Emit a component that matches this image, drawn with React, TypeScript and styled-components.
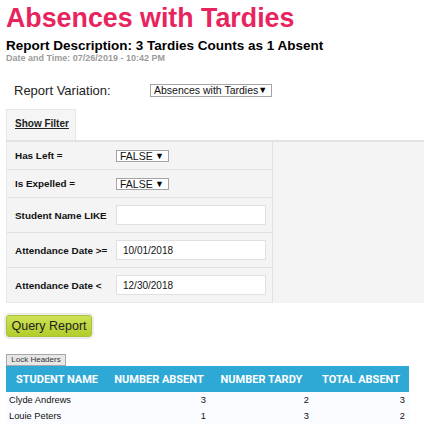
import React, { FC } from "react";
import styled, { createGlobalStyle } from "styled-components";

const GlobalStyle = createGlobalStyle`
  html, body {
    margin: 0;
    padding: 0;
    background: #fff;
    font-family: "Liberation Sans", Arial, sans-serif;
    color: #111;
  }
`;

const Page = styled.div`
  padding: 5px 0 0 6px;
  width: 418px;
  overflow: hidden;
`;

const Title = styled.h1`
  margin: 0;
  font-size: 26.8px;
  line-height: 26px;
  font-weight: bold;
  color: #e8245e;
`;

const Description = styled.h2`
  margin: 8px 0 0;
  font-size: 13.5px;
  line-height: 13px;
  font-weight: bold;
  color: #000;
`;

const Stamp = styled.div`
  margin-top: 1px;
  font-size: 9px;
  line-height: 10px;
  font-weight: bold;
  color: #9b9b9b;
`;

const VariationRow = styled.div`
  display: flex;
  align-items: center;
  height: 14px;
  margin: 20px 0 0 8px;
  font-size: 13px;
  color: #222;
`;

const VariationLabel = styled.span`
  width: 136px;
`;

const FakeSelect = styled.span<{ $width: number; $height: number }>`
  display: inline-flex;
  align-items: center;
  box-sizing: border-box;
  width: ${(p) => p.$width}px;
  height: ${(p) => p.$height}px;
  padding: 0 4px 0 3px;
  border: 1px solid #a4a4a4;
  background: #fff;
  font-size: 10.5px;
  line-height: 10px;
  color: #111;
  white-space: nowrap;
  overflow: hidden;
  &::after {
    content: "▼";
    margin-left: auto;
    font-size: 9px;
    color: #000;
  }
`;

const TabStrip = styled.div`
  display: flex;
  margin-top: 12px;
`;

const Tab = styled.div`
  box-sizing: border-box;
  width: 70px;
  height: 31px;
  padding: 8px 0 0 8px;
  background: #f5f5f5;
  border: 1px solid #e6e6e6;
  border-bottom: none;
  font-size: 10px;
  font-weight: bold;
  text-decoration: underline;
  color: #222;
`;

const FilterPanel = styled.div`
  display: flex;
  width: 430px;
  background: #f4f4f4;
  border-top: 2px solid #e2e2e2;
`;

const FilterTable = styled.div`
  width: 267px;
  border-right: 1px solid #e2e2e2;
  border-left: 1px solid #e9e9e9;
  box-sizing: border-box;
`;

const FilterRow = styled.div<{ $height: number }>`
  display: flex;
  align-items: center;
  height: ${(p) => p.$height}px;
  border-bottom: 1px solid #e2e2e2;
  &:last-child {
    border-bottom: 1px solid #e6e6e6;
  }
`;

const FilterLabel = styled.span`
  width: 109px;
  padding-left: 8px;
  box-sizing: border-box;
  font-size: 9.9px;
  font-weight: bold;
  color: #111;
  white-space: nowrap;
`;

const TextBox = styled.div`
  box-sizing: border-box;
  width: 150px;
  height: 20px;
  padding: 0 6px;
  display: flex;
  align-items: center;
  background: #fff;
  border: 1px solid #e0e0e0;
  font-size: 10px;
  color: #111;
`;

const QueryButton = styled.button`
  margin: 12px 0 0;
  width: 86px;
  height: 22px;
  padding: 0;
  border: 1px solid #a9c23a;
  border-radius: 3px;
  background: linear-gradient(#cfe256, #b2cd2c);
  box-shadow: 0 0 0 2px #ececec;
  font-family: "Liberation Sans", Arial, sans-serif;
  font-size: 12.5px;
  color: #222;
`;

const LockButton = styled.button`
  display: block;
  margin-top: 17px;
  width: 60px;
  height: 12px;
  padding: 0;
  border: 1px solid #a8a8a8;
  background: #e7e7e7;
  font-family: "Liberation Sans", Arial, sans-serif;
  font-size: 8px;
  line-height: 10px;
  color: #333;
`;

const Table = styled.table`
  border-collapse: collapse;
  width: 403px;
  table-layout: fixed;
`;

const HeadCell = styled.th<{ $width: number }>`
  width: ${(p) => p.$width}px;
  height: 26px;
  padding: 0;
  background: #2ea8d5;
  color: #fff;
  font-family: Roboto, "Liberation Sans", sans-serif;
  font-size: 11px;
  font-weight: bold;
  text-align: center;
`;

const Cell = styled.td<{ $num?: boolean }>`
  height: 16px;
  padding: 0 ${(p) => (p.$num ? "4px" : "3px")};
  background: #fbfcff;
  font-size: 9.3px;
  color: #111;
  text-align: ${(p) => (p.$num ? "right" : "left")};
`;

interface StudentRow {
  name: string;
  absent: number;
  tardy: number;
  total: number;
}

const rows: StudentRow[] = [
  { name: "Clyde Andrews", absent: 3, tardy: 2, total: 3 },
  { name: "Louie Peters", absent: 1, tardy: 3, total: 2 },
];

const App: FC = () => {
  return (
    <Page>
      <GlobalStyle />
      <Title>Absences with Tardies</Title>
      <Description>Report Description: 3 Tardies Counts as 1 Absent</Description>
      <Stamp>Date and Time: 07/26/2019 - 10:42 PM</Stamp>

      <VariationRow>
        <VariationLabel>Report Variation:</VariationLabel>
        <FakeSelect $width={122} $height={13}>Absences with Tardies</FakeSelect>
      </VariationRow>

      <TabStrip>
        <Tab>Show Filter</Tab>
      </TabStrip>
      <FilterPanel>
        <FilterTable>
          <FilterRow $height={27}>
            <FilterLabel>Has Left =</FilterLabel>
            <FakeSelect $width={53} $height={12}>FALSE</FakeSelect>
          </FilterRow>
          <FilterRow $height={27}>
            <FilterLabel>Is Expelled =</FilterLabel>
            <FakeSelect $width={53} $height={12}>FALSE</FakeSelect>
          </FilterRow>
          <FilterRow $height={34}>
            <FilterLabel>Student Name LIKE</FilterLabel>
            <TextBox />
          </FilterRow>
          <FilterRow $height={34}>
            <FilterLabel>Attendance Date &gt;=</FilterLabel>
            <TextBox>10/01/2018</TextBox>
          </FilterRow>
          <FilterRow $height={34}>
            <FilterLabel>Attendance Date &lt;</FilterLabel>
            <TextBox>12/30/2018</TextBox>
          </FilterRow>
        </FilterTable>
      </FilterPanel>

      <QueryButton>Query Report</QueryButton>
      <LockButton>Lock Headers</LockButton>

      <Table>
        <thead>
          <tr>
            <HeadCell $width={102}>STUDENT NAME</HeadCell>
            <HeadCell $width={102}>NUMBER ABSENT</HeadCell>
            <HeadCell $width={103}>NUMBER TARDY</HeadCell>
            <HeadCell $width={96}>TOTAL ABSENT</HeadCell>
          </tr>
        </thead>
        <tbody>
          {rows.map((r) => (
            <tr key={r.name}>
              <Cell>{r.name}</Cell>
              <Cell $num>{r.absent}</Cell>
              <Cell $num>{r.tardy}</Cell>
              <Cell $num>{r.total}</Cell>
            </tr>
          ))}
        </tbody>
      </Table>
    </Page>
  );
};

export default App;
